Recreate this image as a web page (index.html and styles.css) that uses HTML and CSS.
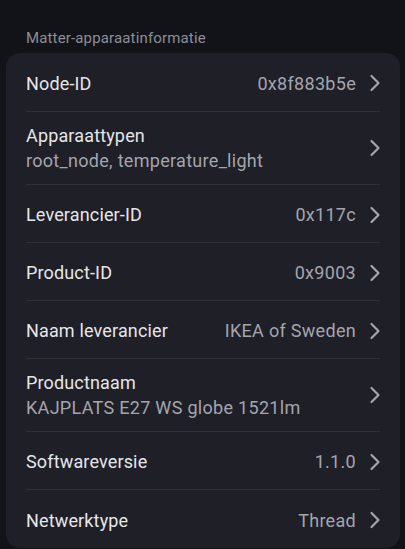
FILE: index.html
```html
<!DOCTYPE html>
<html lang="nl">
<head>
    <meta charset="UTF-8">
    <meta name="viewport" content="width=device-width, initial-scale=1.0">
    <title>Matter-apparaatinformatie</title>
    <link rel="stylesheet" href="styles.css">
</head>
<body>
    <div class="section-title">Matter-apparaatinformatie</div>
    <div class="card">
        <div class="row">
            <div class="label">Node-ID</div>
            <div class="value">0x8f883b5e</div>
            <svg class="chevron" viewBox="0 0 12 18"><path d="M2.5 2 L9.5 9 L2.5 16"/></svg>
        </div>
        <div class="row two-line">
            <div class="text">
                <div class="label">Apparaattypen</div>
                <div class="sub">root_node, temperature_light</div>
            </div>
            <svg class="chevron" viewBox="0 0 12 18"><path d="M2.5 2 L9.5 9 L2.5 16"/></svg>
        </div>
        <div class="row">
            <div class="label">Leverancier-ID</div>
            <div class="value">0x117c</div>
            <svg class="chevron" viewBox="0 0 12 18"><path d="M2.5 2 L9.5 9 L2.5 16"/></svg>
        </div>
        <div class="row">
            <div class="label">Product-ID</div>
            <div class="value">0x9003</div>
            <svg class="chevron" viewBox="0 0 12 18"><path d="M2.5 2 L9.5 9 L2.5 16"/></svg>
        </div>
        <div class="row">
            <div class="label">Naam leverancier</div>
            <div class="value">IKEA of Sweden</div>
            <svg class="chevron" viewBox="0 0 12 18"><path d="M2.5 2 L9.5 9 L2.5 16"/></svg>
        </div>
        <div class="row two-line">
            <div class="text">
                <div class="label">Productnaam</div>
                <div class="sub">KAJPLATS E27 WS globe 1521lm</div>
            </div>
            <svg class="chevron" viewBox="0 0 12 18"><path d="M2.5 2 L9.5 9 L2.5 16"/></svg>
        </div>
        <div class="row">
            <div class="label">Softwareversie</div>
            <div class="value">1.1.0</div>
            <svg class="chevron" viewBox="0 0 12 18"><path d="M2.5 2 L9.5 9 L2.5 16"/></svg>
        </div>
        <div class="row">
            <div class="label">Netwerktype</div>
            <div class="value">Thread</div>
            <svg class="chevron" viewBox="0 0 12 18"><path d="M2.5 2 L9.5 9 L2.5 16"/></svg>
        </div>
    </div>
</body>
</html>
```
FILE: styles.css
```css
body, html {
    margin: 0;
    padding: 0;
    height: 100%;
    overflow: hidden;
    background-color: #121319;
    font-family: Roboto, 'Noto Sans', sans-serif;
}
.section-title {
    padding: 29px 26px 0;
    height: 24px;
    font-size: 15px;
    letter-spacing: 0.15px;
    color: #8d8e95;
}
.card {
    margin: 0 5px 0 6px;
    background-color: #1e1f27;
    border-radius: 14px;
}
.row {
    display: flex;
    align-items: center;
    box-sizing: border-box;
    height: 58px;
    padding-top: 2px;
    margin: 0 20px;
    border-bottom: 1px solid #2e2f37;
}
.row:first-child {
    height: 59px;
}
.row.two-line {
    height: 73px;
    padding-top: 0;
}
.row:last-child {
    border-bottom: none;
}
.text {
    flex-grow: 1;
}
.label {
    flex-grow: 1;
    font-size: 18px;
    letter-spacing: 0.15px;
    color: #e6e6ea;
}
.two-line .label {
    margin-bottom: 4px;
}
.sub {
    font-size: 18px;
    letter-spacing: 0.3px;
    color: #a4a5ad;
}
.value {
    font-size: 18px;
    letter-spacing: 0.3px;
    color: #a4a5ad;
}
.chevron {
    width: 12px;
    height: 18px;
    margin-left: 13px;
    margin-right: -1px;
    flex-shrink: 0;
    fill: none;
    stroke: #a4a5ab;
    stroke-width: 2.2;
    stroke-linecap: round;
    stroke-linejoin: round;
}
```
